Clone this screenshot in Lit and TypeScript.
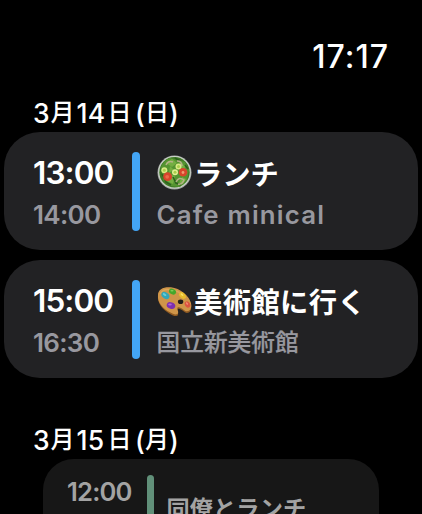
import { LitElement, html, css, svg, nothing } from "lit";
import { customElement, property } from "lit/decorators.js";
import { classMap } from "lit/directives/class-map.js";

interface EventItem {
  start: string;
  end?: string;
  title: string;
  place?: string;
  icon?: "salad" | "palette";
}

const salad = svg`
  <circle cx="17.5" cy="17.5" r="17" fill="#a5aaa5"/>
  <circle cx="17.5" cy="17.3" r="16.2" fill="#cdd3ca"/>
  <circle cx="17.5" cy="17.3" r="15.2" fill="#3f7a26"/>
  <path d="M4 12q3-7 9-9l8 2 7 2 4 8-2 10-7 7-9-1-8-6z" fill="#549430"/>
  <path d="M9 8l6-4 5 4-5 4zM23 7l5 4-1 6-6-3zM12 19l6 2-2 8-6-3zM25 22l4 2-3 5-5 1zM13 11l4 4-5 3z" fill="#74ae42"/>
  <path d="M5 19l4 8 5 3M18 3l5 3M16 22l3 6 5 2M28 10l3 4" fill="none" stroke="#2c611d" stroke-width="1.6"/>
  <path d="M9 10q2-5 7-3M20 6q5 0 5 5M19 27q3-6 8-2-2 5-6 4" fill="none" stroke="#b5b187" stroke-width="1.5"/>
  <circle cx="7.3" cy="15.3" r="3" fill="#d9eb86"/><circle cx="7.3" cy="15.3" r="1.5" fill="#a8cf4c"/>
  <circle cx="21.5" cy="11.5" r="3" fill="#d9eb86"/><circle cx="21.5" cy="11.5" r="1.5" fill="#a8cf4c"/>
  <circle cx="18" cy="17.3" r="3" fill="#e2f094"/><circle cx="18" cy="17.3" r="1.5" fill="#a8cf4c"/>
  <circle cx="10.6" cy="21.7" r="4.4" fill="#d8452c"/><circle cx="10.2" cy="21.8" r="1.9" fill="#ea6a4a"/>
  <circle cx="26" cy="17.2" r="4.3" fill="#d8452c"/><circle cx="26" cy="17.5" r="1.4" fill="#f09a70"/>`;

const palette = svg`
  <path d="M1 10C1 4 7 1 14 2c9 1 18 8 20 16 1 6-1 9-4 9-3 0-6-5-9-4-2 1 1 4 0 6-1 2-5 1-8-1C6 24 0 17 1 10z" fill="#8f5a22"/>
  <path d="M1 9C1 3 7 .5 14 1.300c9 1 18 8 20 16 1 5-1 8-4 8-3 0-6-5-9-4-2 1 1 4 0 6-1 2-5 1-8-1C6 23 0 16 1 9z" fill="#cf9549"/>
  <path d="M3 8q3-6 12-4 8 1 14 8" fill="none" stroke="#dca65b" stroke-width="1.3"/>
  <ellipse cx="8.400" cy="9.500" rx="4.400" ry="3" transform="rotate(35 8.400 9.500)" fill="#35a7b8"/>
  <ellipse cx="7.600" cy="8.600" rx="2" ry="1" transform="rotate(35 7.600 8.600)" fill="#6acdd6"/>
  <ellipse cx="15.500" cy="5.600" rx="3.700" ry="2.700" transform="rotate(25 15.500 5.600)" fill="#45a72b"/>
  <ellipse cx="15" cy="4.700" rx="1.600" ry=".8" fill="#83cf59"/>
  <ellipse cx="25.500" cy="9.500" rx="3.800" ry="2.600" transform="rotate(42 25.500 9.500)" fill="#e9bd2c"/>
  <ellipse cx="25" cy="8.700" rx="1.700" ry=".8" transform="rotate(42 25 8.700)" fill="#fae36c"/>
  <ellipse cx="14" cy="19.500" rx="4.400" ry="3.200" transform="rotate(20 14 19.500)" fill="#7d2fb0"/>
  <ellipse cx="13" cy="18.500" rx="1.800" ry=".9" fill="#ad62d6"/>
  <ellipse cx="30.500" cy="18.500" rx="3.300" ry="2.500" transform="rotate(55 30.500 18.500)" fill="#dc5340"/>
  <ellipse cx="30" cy="17.500" rx="1.500" ry=".8" transform="rotate(55 30 17.500)" fill="#f48a70"/>
  <ellipse cx="23.600" cy="15.800" rx="2.700" ry="2.300" fill="#211b18"/>`;

@customElement("event-card")
export class EventCard extends LitElement {
  @property({ attribute: false }) item!: EventItem;
  @property({ type: Boolean }) receding = false;

  static styles = css`
    :host { display: block; flex-shrink: 0; }
    .card {
      display: flex;
      box-sizing: border-box;
      height: 118px;
      margin: 0 4px;
      padding: 20px 0 0 29px;
      border-radius: 36px;
      background: #222224;
      color: #fff;
    }
    .times { width: 99px; }
    .start { font-size: 31.5px; line-height: 42px; font-weight: 600; letter-spacing: -0.9px; white-space: nowrap; }
    .end { font-size: 26px; line-height: 42px; font-weight: 600; color: #98989f; letter-spacing: -0.7px; }
    .bar { width: 8px; height: 79px; border-radius: 4px; background: #43a5f5; margin-right: 17px; }
    .title { display: flex; align-items: center; height: 40px; font-size: 28.3px; font-weight: 700; white-space: nowrap; }
    .title svg { width: 35px; height: 35px; margin-right: 2px; }
    .title .long { letter-spacing: 0.4px; }
    .place { font-size: 23.700px; line-height: 46px; font-weight: 500; color: #98989f; white-space: nowrap; margin-left: -0.5px; -webkit-text-stroke: 0.2px #98989f; }
    .latin { font-size: 25.800px; line-height: 46px; font-weight: 600; letter-spacing: 1.200px; -webkit-text-stroke: 0; }
    .receding { margin: 0 43px; height: 96px; padding: 16px 0 0 24px; border-radius: 31px; background: #171717; color: #a3a3a3; }
    .receding .times { width: 80px; }
    .receding .start { font-size: 25.6px; line-height: 34px; letter-spacing: -0.8px; }
    .receding .bar { width: 6.500px; height: 64px; border-radius: 4px; background: #619079; margin-right: 13px; }
    .receding .title { font-size: 23.200px; height: 64px; }
    .receding .title .long { letter-spacing: 0.1px; }
  `;

  render() {
    const { start, end, title, place, icon } = this.item;
    const latin = !!place && /^[\x20-\x7e]+$/.test(place);
    return html`
      <div class=${classMap({ card: true, receding: this.receding })}>
        <div class="times">
          <div class="start">${start}</div>
          ${end ? html`<div class="end">${end}</div>` : nothing}
        </div>
        <div class="bar"></div>
        <div class="body">
          <div class="title">
            ${icon ? html`<svg viewBox="0 0 35 35">${icon === "salad" ? salad : svg`<g transform="translate(0 3)">${palette}</g>`}</svg>` : nothing}
            <span class=${classMap({ long: title.length > 4 })}>${title}</span>
          </div>
          ${place ? html`<div class=${classMap({ place: true, latin })}>${place}</div>` : nothing}
        </div>
      </div>`;
  }
}

@customElement("date-heading")
export class DateHeading extends LitElement {
  @property() month = "";
  @property() day = "";
  @property() weekday = "";

  static styles = css`
    :host { display: flex; flex-shrink: 0; padding-left: 33px; height: 38px; line-height: 38px; font-size: 26.500px; font-weight: 500; color: #fff; white-space: nowrap; }
    .kanji { font-size: 24px; }
    .month { width: 17.500px; }
    .tsuki { width: 26px; }
    .day { width: 31px; letter-spacing: 0.3px; }
    .nichi { width: 27.500px; }
    .open { width: 10px; }
    .week { width: 24px; }
  `;

  render() {
    return html`<span class="month">${this.month}</span><span class="kanji tsuki">月</span><span class="day">${this.day}</span><span class="kanji nichi">日</span><span class="open">(</span><span class="kanji week">${this.weekday}</span><span>)</span>`;
  }
}

@customElement("app-root")
export class AppRoot extends LitElement {
  static styles = css`
    :host {
      display: flex;
      flex-direction: column;
      height: 514px;
      overflow: hidden;
      background: #000;
      font-family: Inter, "Noto Sans CJK JP", sans-serif;
    }
    .clock { flex-shrink: 0; height: 94px; box-sizing: border-box; padding: 37px 33px 0 0; text-align: right; color: #fff; font-size: 32px; line-height: 40px; font-weight: 500; letter-spacing: 1px; }
    .events { display: flex; flex-shrink: 0; flex-direction: column; gap: 10px; margin-bottom: 43px; }
  `;

  private today: EventItem[] = [
    { start: "13:00", end: "14:00", title: "ランチ", place: "Cafe minical", icon: "salad" },
    { start: "15:00", end: "16:30", title: "美術館に行く", place: "国立新美術館", icon: "palette" },
  ];

  render() {
    return html`
      <div class="clock">17:17</div>
      <date-heading month="3" day="14" weekday="日"></date-heading>
      <div class="events">${this.today.map((item) => html`<event-card .item=${item}></event-card>`)}</div>
      <date-heading month="3" day="15" weekday="月"></date-heading>
      <event-card receding .item=${{ start: "12:00", title: "同僚とランチ" }}></event-card>`;
  }
}
